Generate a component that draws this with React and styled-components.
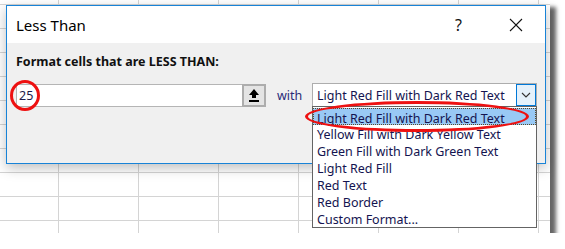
import React from 'react';
import styled, { createGlobalStyle } from 'styled-components';

const GlobalStyle = createGlobalStyle`
    body {
        margin: 0;
        background: #fff;
        font-family: "Noto Sans", "Open Sans", sans-serif;
    }
`;

const options = [
    'Light Red Fill with Dark Red Text',
    'Yellow Fill with Dark Yellow Text',
    'Green Fill with Dark Green Text',
    'Light Red Fill',
    'Red Text',
    'Red Border',
    'Custom Format...',
];

export default function App() {
    return (
        <>
            <GlobalStyle />
            <Sheet>
                <Dialog>
                    <TitleBar>
                        <Title>Less Than</Title>
                        <TitleButton $w={69}>?</TitleButton>
                        <TitleButton $w={45}>
                            <svg width="14" height="14" viewBox="0 0 14 14">
                                <path d="M1 1 L13 13 M13 1 L1 13" stroke="#111" strokeWidth="1.1" />
                            </svg>
                        </TitleButton>
                    </TitleBar>
                    <Body>
                        <Heading>Format cells that are LESS THAN:</Heading>
                        <Row>
                            <InputWrap>
                                <ValueBox>25</ValueBox>
                                <RefButton>
                                    <svg width="12" height="14" viewBox="0 0 12 14">
                                        <path d="M6 1 L11 7 L8 7 L8 10 L4 10 L4 7 L1 7 Z" fill="#000" />
                                        <rect x="1" y="12" width="10" height="2" fill="#000" />
                                    </svg>
                                </RefButton>
                                <Mark $w={30} $h={31} $left={-6} $top={-4} />
                            </InputWrap>
                            <WithLabel>with</WithLabel>
                            <SelectWrap>
                                <SelectBox>
                                    <SelectText>{options[0]}</SelectText>
                                    <Arrow>
                                        <svg width="10" height="6" viewBox="0 0 10 6">
                                            <path d="M1 1 L5 5 L9 1" stroke="#333" strokeWidth="1.1" fill="none" />
                                        </svg>
                                    </Arrow>
                                </SelectBox>
                                <List>
                                    {options.map((o, i) => (
                                        <Item key={o} $active={i === 0}>{o}</Item>
                                    ))}
                                </List>
                                <Mark $w={224} $h={31} $left={-7} $top={18} />
                            </SelectWrap>
                        </Row>
                    </Body>
                </Dialog>
            </Sheet>
        </>
    );
}

const Sheet = styled.div`
    width: 550px;
    height: 233px;
    box-sizing: border-box;
    padding: 5px 0 0 6px;
    background-color: #fff;
    background-image:
        linear-gradient(to right, #d4d4d4 1px, transparent 1px),
        linear-gradient(to bottom, #d4d4d4 1px, transparent 1px);
    background-size: 80px 24px;
    background-position: 58px 4px;
    box-shadow: 6px 7px 4px rgba(0, 0, 0, 0.6);
`;

const Dialog = styled.div`
    width: 540px;
    height: 159px;
    box-sizing: border-box;
    border: 1px solid #1883d7;
    background: #f0f0f0;
    box-shadow: 0 4px 12px rgba(0, 0, 0, 0.25);
    display: flex;
    flex-direction: column;
`;

const TitleBar = styled.div`
    height: 37px;
    background: #fff;
    display: flex;
    align-items: center;
    padding-left: 9px;
    padding-right: 7px;
`;

const Title = styled.div`
    flex: 1;
    font-size: 15px;
    color: #000;
    padding-top: 1px;
`;

const TitleButton = styled.div`
    width: ${p => p.$w}px;
    display: flex;
    justify-content: center;
    font-size: 16px;
    color: #111;
`;

const Body = styled.div`
    padding: 10px 0 0 9px;
`;

const Heading = styled.div`
    font-size: 12.5px;
    font-weight: bold;
    color: #111;
    height: 18px;
`;

const Row = styled.div`
    display: flex;
    align-items: center;
    margin-top: 12px;
`;

const InputWrap = styled.div`
    position: relative;
    display: flex;
`;

const ValueBox = styled.div`
    width: 226px;
    height: 23px;
    box-sizing: border-box;
    background: #fff;
    border: 1px solid #b5b5b5;
    border-right: none;
    font-size: 12.5px;
    color: #1a1a4a;
    padding-left: 2px;
    line-height: 21px;
`;

const RefButton = styled.div`
    width: 24px;
    height: 23px;
    box-sizing: border-box;
    border: 2px solid #adadad;
    background: #e4e4e4;
    display: flex;
    align-items: center;
    justify-content: center;
`;

const Mark = styled.div`
    position: absolute;
    left: ${p => p.$left}px;
    top: ${p => p.$top}px;
    width: ${p => p.$w}px;
    height: ${p => p.$h}px;
    box-sizing: border-box;
    border: 3px solid #ee1111;
    border-radius: 50%;
    pointer-events: none;
`;

const WithLabel = styled.div`
    margin-left: 11px;
    width: 35px;
    font-size: 12.5px;
    color: #2a2a78;
`;

const SelectWrap = styled.div`
    position: relative;
`;

const SelectBox = styled.div`
    width: 225px;
    height: 24px;
    box-sizing: border-box;
    border: 1px solid #adadad;
    background: #fff;
    display: flex;
    align-items: center;
`;

const SelectText = styled.div`
    flex: 1;
    font-size: 12.5px;
    color: #141450;
    padding-left: 4px;
    white-space: nowrap;
`;

const Arrow = styled.div`
    width: 20px;
    height: 22px;
    box-sizing: border-box;
    border: 1px solid #0078d7;
    background: #e5f1fb;
    display: flex;
    align-items: center;
    justify-content: center;
`;

const List = styled.div`
    position: absolute;
    top: 23px;
    left: 0;
    width: 225px;
    box-sizing: border-box;
    border: 1px solid #646464;
    background: #fff;
    padding: 1px 0 0 0;
`;

const Item = styled.div`
    height: 17px;
    padding-top: 3px;
    line-height: 14px;
    box-sizing: border-box;
    font-size: 12.5px;
    color: #141450;
    padding-left: 3px;
    white-space: nowrap;
    background: ${p => (p.$active ? '#99c9f5' : 'transparent')};
    border: 1px ${p => (p.$active ? 'dotted #5a4a2a' : 'solid transparent')};
    border-top-width: ${p => (p.$active ? '1px' : '0')};
    border-bottom-width: ${p => (p.$active ? '1px' : '0')};
`;
